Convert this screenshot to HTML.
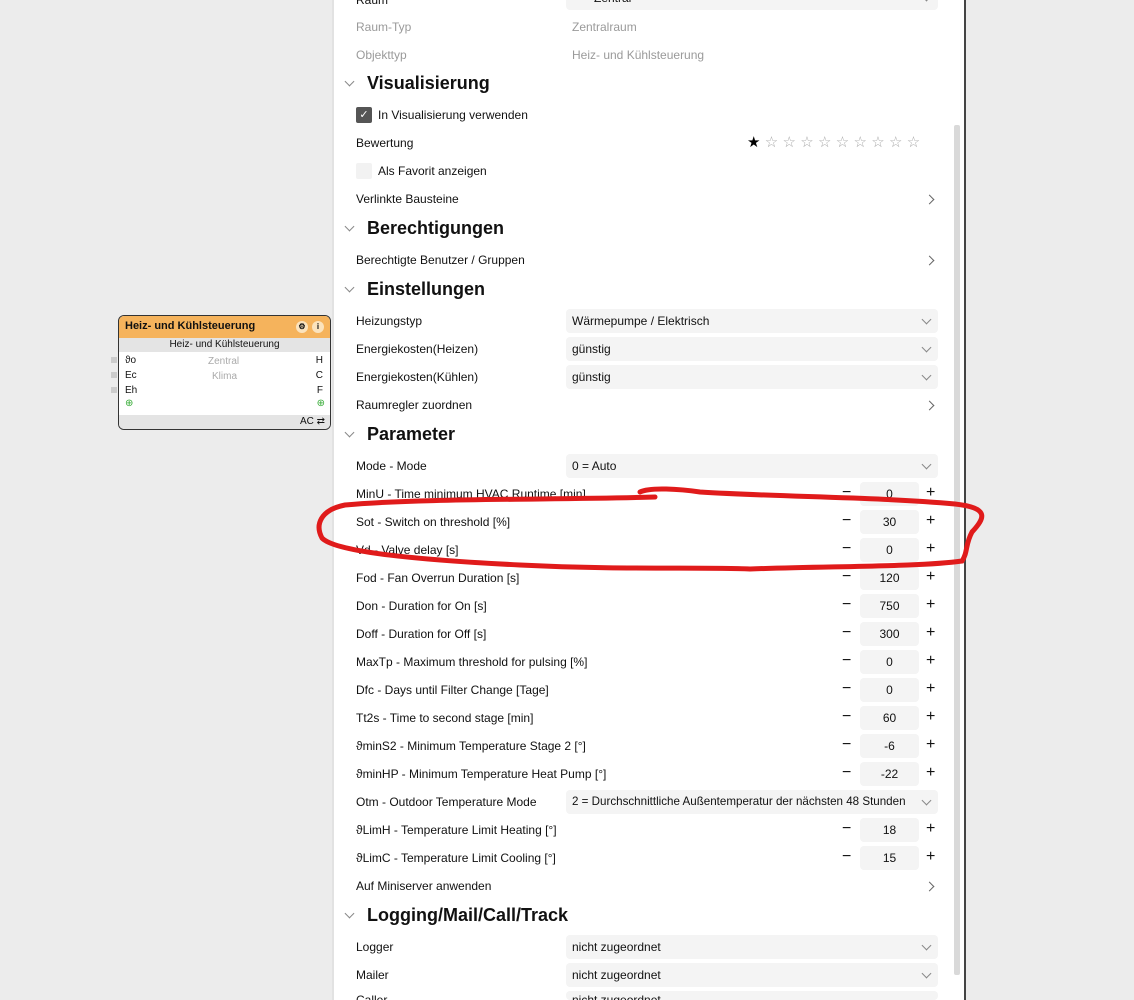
<!DOCTYPE html>
<html><head><meta charset="utf-8"><style>
*{margin:0;padding:0;box-sizing:border-box}
html{overflow:hidden;height:1000px}
body{width:1134px;height:1000px;overflow:hidden;background:#ececec;font-family:"Liberation Sans",sans-serif;font-size:12px;color:#111;position:relative}
.panel{position:absolute;left:332px;top:0;width:634px;height:1000px;background:#fff;border-left:2px solid #e2e2e2;border-right:2px solid #444}
.a{position:absolute;white-space:nowrap}
.l{left:356px}
.g{color:#9a9a9a}
.h{left:367px;font-size:18px;font-weight:bold}
.chev{position:absolute;left:346px;width:7px;height:7px;border-right:1px solid #888;border-bottom:1px solid #888;transform:rotate(45deg)}
.sel{position:absolute;left:566px;width:372px;height:24px;background:#f4f4f4;border-radius:4px;padding-left:6px;line-height:24px;overflow:hidden}
.sel:after{content:"";position:absolute;right:8px;top:7px;width:6px;height:6px;border-right:1px solid #888;border-bottom:1px solid #888;transform:rotate(45deg)}
.arr{position:absolute;left:926px;width:7px;height:7px;border-right:1.2px solid #666;border-top:1.2px solid #666;transform:rotate(45deg)}
.box{position:absolute;left:860px;width:59px;height:24px;background:#f4f4f4;border-radius:4px;text-align:center;line-height:24px}
.mi{position:absolute;left:842px;font-size:16px}
.pl{position:absolute;left:926px;font-size:16px}
.sc{position:absolute;left:954px;top:125px;width:6px;height:850px;background:#d9d9d9;border-radius:2px}
.w{position:absolute;left:118px;top:315px;width:213px;height:115px;border:1.5px solid #333;border-radius:6px;background:#fff;overflow:hidden;font-size:10px}
</style></head><body>
<div class="panel"></div>
<div class="sc"></div>
<div class="sel" style="top:-14px;line-height:24px;padding-left:28px">Zentral</div>
<div class="a l" style="top:-7px">Raum</div>
<div class="a l g" style="top:20px">Raum-Typ</div><div class="a g" style="left:572px;top:20px">Zentralraum</div>
<div class="a l g" style="top:48px">Objekttyp</div><div class="a g" style="left:572px;top:48px">Heiz- und Kühlsteuerung</div>
<div class="chev" style="top:78px"></div><div class="a h" style="top:73px">Visualisierung</div>
<div class="a" style="left:356px;top:107px;width:16px;height:16px;background:#555;border-radius:2px;color:#fff;font-size:11px;text-align:center;line-height:16px">✓</div>
<div class="a" style="left:378px;top:108px">In Visualisierung verwenden</div>
<div class="a l" style="top:136px">Bewertung</div>
<div class="a" style="left:747px;top:133px;font-size:15px;letter-spacing:4.3px;color:#aaa"><span style="color:#000">★</span>☆☆☆☆☆☆☆☆☆</div>
<div class="a" style="left:356px;top:163px;width:16px;height:16px;background:#f2f2f2;border-radius:2px"></div>
<div class="a" style="left:378px;top:164px">Als Favorit anzeigen</div>
<div class="a l" style="top:192px">Verlinkte Bausteine</div><div class="arr" style="top:196px"></div>
<div class="chev" style="top:223px"></div><div class="a h" style="top:218px">Berechtigungen</div>
<div class="a l" style="top:253px">Berechtigte Benutzer / Gruppen</div><div class="arr" style="top:257px"></div>
<div class="chev" style="top:284px"></div><div class="a h" style="top:279px">Einstellungen</div>
<div class="a l" style="top:314px">Heizungstyp</div><div class="sel" style="top:309px">Wärmepumpe / Elektrisch</div>
<div class="a l" style="top:342px">Energiekosten(Heizen)</div><div class="sel" style="top:337px">günstig</div>
<div class="a l" style="top:370px">Energiekosten(Kühlen)</div><div class="sel" style="top:365px">günstig</div>
<div class="a l" style="top:398px">Raumregler zuordnen</div><div class="arr" style="top:402px"></div>
<div class="chev" style="top:429px"></div><div class="a h" style="top:424px">Parameter</div>
<div class="a l" style="top:459px">Mode - Mode</div><div class="sel" style="top:454px">0 = Auto</div>
<div class="a l" style="top:487px">MinU - Time minimum HVAC Runtime [min]</div><div class="mi" style="top:484px">−</div><div class="box" style="top:482px">0</div><div class="pl" style="top:484px">+</div>
<div class="a l" style="top:515px">Sot - Switch on threshold [%]</div><div class="mi" style="top:512px">−</div><div class="box" style="top:510px">30</div><div class="pl" style="top:512px">+</div>
<div class="a l" style="top:543px">Vd - Valve delay [s]</div><div class="mi" style="top:540px">−</div><div class="box" style="top:538px">0</div><div class="pl" style="top:540px">+</div>
<div class="a l" style="top:571px">Fod - Fan Overrun Duration [s]</div><div class="mi" style="top:568px">−</div><div class="box" style="top:566px">120</div><div class="pl" style="top:568px">+</div>
<div class="a l" style="top:599px">Don - Duration for On [s]</div><div class="mi" style="top:596px">−</div><div class="box" style="top:594px">750</div><div class="pl" style="top:596px">+</div>
<div class="a l" style="top:627px">Doff - Duration for Off [s]</div><div class="mi" style="top:624px">−</div><div class="box" style="top:622px">300</div><div class="pl" style="top:624px">+</div>
<div class="a l" style="top:655px">MaxTp - Maximum threshold for pulsing [%]</div><div class="mi" style="top:652px">−</div><div class="box" style="top:650px">0</div><div class="pl" style="top:652px">+</div>
<div class="a l" style="top:683px">Dfc - Days until Filter Change [Tage]</div><div class="mi" style="top:680px">−</div><div class="box" style="top:678px">0</div><div class="pl" style="top:680px">+</div>
<div class="a l" style="top:711px">Tt2s - Time to second stage [min]</div><div class="mi" style="top:708px">−</div><div class="box" style="top:706px">60</div><div class="pl" style="top:708px">+</div>
<div class="a l" style="top:739px">ϑminS2 - Minimum Temperature Stage 2 [°]</div><div class="mi" style="top:736px">−</div><div class="box" style="top:734px">-6</div><div class="pl" style="top:736px">+</div>
<div class="a l" style="top:767px">ϑminHP - Minimum Temperature Heat Pump [°]</div><div class="mi" style="top:764px">−</div><div class="box" style="top:762px">-22</div><div class="pl" style="top:764px">+</div>
<div class="a l" style="top:795px">Otm - Outdoor Temperature Mode</div><div class="sel" style="top:790px;font-size:11.6px">2 = Durchschnittliche Außentemperatur der nächsten 48 Stunden</div>
<div class="a l" style="top:823px">ϑLimH - Temperature Limit Heating [°]</div><div class="mi" style="top:820px">−</div><div class="box" style="top:818px">18</div><div class="pl" style="top:820px">+</div>
<div class="a l" style="top:851px">ϑLimC - Temperature Limit Cooling [°]</div><div class="mi" style="top:848px">−</div><div class="box" style="top:846px">15</div><div class="pl" style="top:848px">+</div>
<div class="a l" style="top:879px">Auf Miniserver anwenden</div><div class="arr" style="top:883px"></div>
<div class="chev" style="top:910px"></div><div class="a h" style="top:905px">Logging/Mail/Call/Track</div>
<div class="a l" style="top:940px">Logger</div><div class="sel" style="top:935px">nicht zugeordnet</div>
<div class="a l" style="top:968px">Mailer</div><div class="sel" style="top:963px">nicht zugeordnet</div>
<div class="a l" style="top:993px">Caller</div><div class="sel" style="top:991px;height:9px;line-height:18px">nicht zugeordnet</div>

<div class="w">
<div style="height:22px;background:#f5b35c;font-weight:bold;font-size:11px;padding:4px 6px;position:relative">Heiz- und Kühlsteuerung
<span style="position:absolute;right:22px;top:5px;width:12px;height:12px;border-radius:6px;background:#fbe3bd;font-size:8px;text-align:center;line-height:12px">⚙</span>
<span style="position:absolute;right:6px;top:5px;width:12px;height:12px;border-radius:6px;background:#fbe3bd;font-size:8px;text-align:center;line-height:12px">i</span></div>
<div style="height:14px;background:#e4e4e4;text-align:center;line-height:14px">Heiz- und Kühlsteuerung</div>
<div class="a" style="left:6px;top:39px">ϑo</div><div class="a" style="left:6px;top:54px">Ec</div><div class="a" style="left:6px;top:69px">Eh</div>
<div class="a" style="left:6px;top:82px;color:#3a3">⊕</div>
<div class="a" style="left:89px;top:40px;color:#aaa">Zentral</div><div class="a" style="left:93px;top:55px;color:#aaa">Klima</div>
<div class="a" style="right:7px;top:39px">H</div><div class="a" style="right:7px;top:54px">C</div><div class="a" style="right:7px;top:69px">F</div>
<div class="a" style="right:5px;top:82px;color:#3a3">⊕</div>
<div style="position:absolute;left:0;right:0;bottom:0;height:14px;background:#e4e4e4;text-align:right;padding-right:5px;line-height:14px">AC ⇄</div>
</div>
<div class="a" style="left:111px;top:357px;width:6px;height:6px;background:#ccc"></div>
<div class="a" style="left:111px;top:372px;width:6px;height:6px;background:#ccc"></div>
<div class="a" style="left:111px;top:387px;width:6px;height:6px;background:#ccc"></div>

<svg style="position:absolute;left:0;top:0" width="1134" height="1000"><path d="M655 497 C560 500 420 498 345 505 C320 510 315 525 322 538 C335 552 420 560 520 565 C620 570 700 567 750 569 C830 566 920 567 962 561 C968 552 965 545 972 532 C985 518 990 508 955 504 C880 497 780 497 700 492 C680 489 650 487 640 492" fill="none" stroke="#e01b1b" stroke-width="5" stroke-linecap="round"/></svg>
</body></html>
